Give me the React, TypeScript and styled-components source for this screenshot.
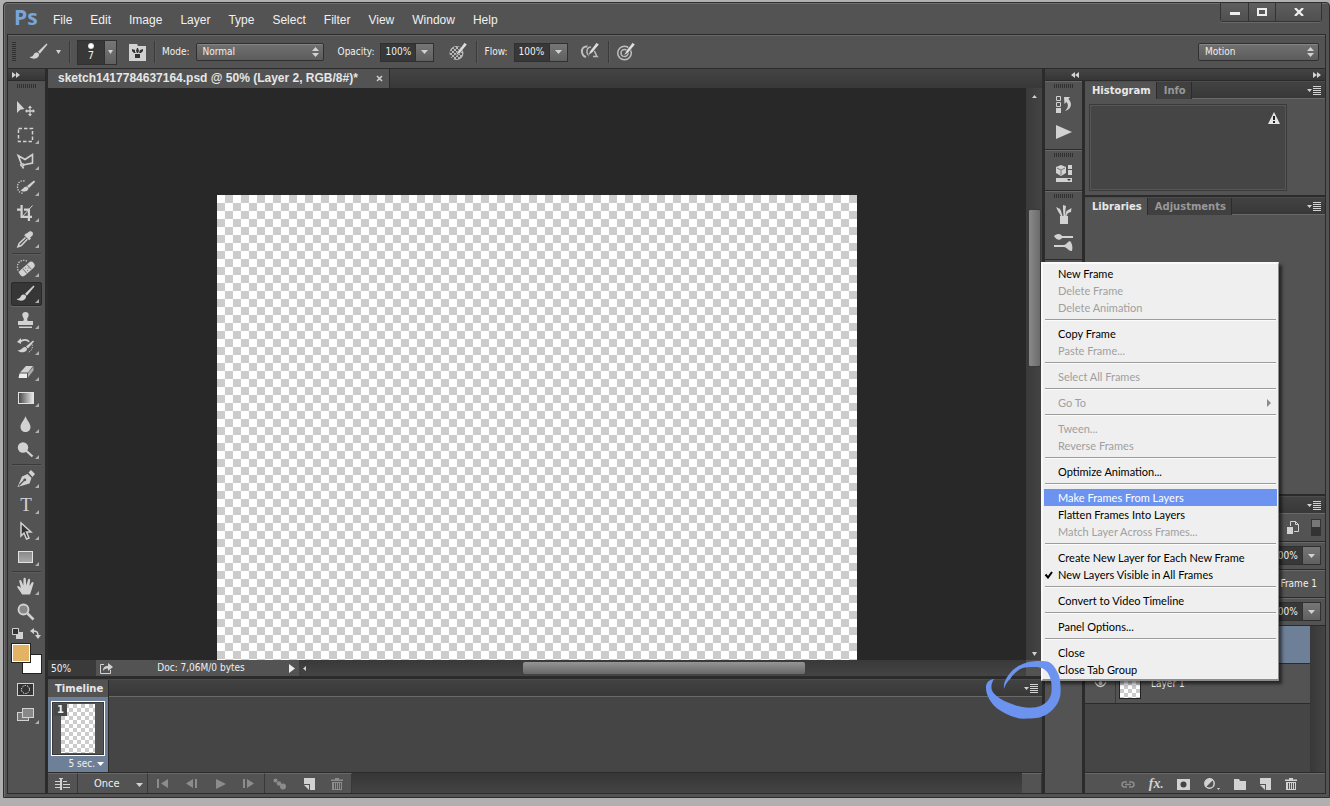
import React from "react";
import styled, { createGlobalStyle, css } from "styled-components";

const ui = `"DejaVu Sans Condensed", "DejaVu Sans", sans-serif`;
const title = `"DejaVu Sans", sans-serif`;
const edge = "#2b2b2b";
const shine = "#696969";
const base = "#535353";
const well = "#454545";
const ink = "#f0f0f0";
const icon = "#d2d2d2";
const checker = (a: number) =>
  `repeating-conic-gradient(#ccc 0 25%, #fff 0 50%) 0 0 / ${a * 2}px ${a * 2}px`;

const GlobalStyle = createGlobalStyle`
  * { box-sizing: border-box; }
  body { margin: 0; background: #b0b0b0; font: 10px/12px ${ui}; color: ${ink}; overflow: hidden; }
  button, select, input { font: inherit; color: inherit; margin: 0; padding: 0; border: 0; border-radius: 0; background: none; }
  svg { display: block; flex: none; }
`;

const Page = styled.div`
  position: relative;
  height: 100vh;
  min-height: 780px;
  padding: 2px 0 8px 3px;
`;
const AppWindow = styled.div`
  display: flex;
  flex-direction: column;
  height: 100%;
  padding: 0 3px 3px;
  background: ${base};
  border: 1px solid #2e2e2e;
  border-radius: 4px 4px 0 0;
  box-shadow: inset 1px 1px 0 #6e6e6e;
`;
const TitleBar = styled.header`
  display: flex;
  align-items: center;
  flex: none;
  height: 31px;
  padding: 0 4px 0 7px;
`;
const Logo = styled.span`
  width: 39px;
  height: 31px;
  font: 700 21px/28px "Open Sans", sans-serif;
  color: #7aa5d8;
`;
const MenuBar = styled.nav`
  display: flex;
  gap: 18px;
  padding-top: 3px;
  font: 12px/16px "Liberation Sans", sans-serif;
`;
const WindowButtons = styled.div`
  display: flex;
  align-self: flex-start;
  margin-left: auto;
  border: 1px solid #333;
  border-top: 0;
  border-radius: 0 0 3px 3px;
  box-shadow: 0 1px 0 #6a6a6a;
`;
const WindowButton = styled.button<{ $wide?: boolean }>`
  display: grid;
  place-items: center;
  width: ${(p) => (p.$wide ? 46 : 27)}px;
  height: 18px;
  background: linear-gradient(#5e5e5e, #505050);
  & + & { border-left: 1px solid #333; }
`;
const Frame = styled.div`
  display: flex;
  flex-direction: column;
  flex: 1;
  min-height: 0;
  border: 1px solid ${edge};
`;
const OptionsBar = styled.div`
  display: flex;
  align-items: center;
  flex: none;
  height: 34px;
  padding: 1px 6px 0 4px;
  border-bottom: 1px solid ${edge};
  box-shadow: inset 0 1px 0 ${shine};
`;
const Group = styled.div<{ $gap?: number }>`
  display: flex;
  align-items: center;
  gap: ${(p) => p.$gap ?? 12}px;
  padding: 0 8px 0 6px;
`;
const BarRule = styled.i`
  width: 2px;
  height: 22px;
  border-left: 1px solid #3a3a3a;
  border-right: 1px solid #5c5c5c;
`;
const SideGrip = styled.i`
  width: 4px;
  height: 20px;
  margin-right: 7px;
  background: repeating-linear-gradient(#303030 0 1px, transparent 1px 2px);
`;
const Label = styled.label`
  display: flex;
  align-items: center;
  gap: 6px;
  white-space: nowrap;
`;
const SelectBox = styled.span<{ $w: number }>`
  position: relative;
  display: block;
  width: ${(p) => p.$w}px;
  height: 18px;
  border: 1px solid #303030;
  border-radius: 2px;
  background: linear-gradient(#717171, #5c5c5c);
  box-shadow: inset 0 1px 0 #858585;
  select { width: 100%; height: 16px; padding-left: 6px; appearance: none; outline: none; }
  svg { position: absolute; right: 4px; top: 3px; pointer-events: none; }
`;
const FieldBox = styled.span`
  display: flex;
  width: 54px;
  height: 19px;
  border: 1px solid #303030;
  background: #383838;
  input { width: 34px; padding-left: 4px; outline: none; }
`;
const DropButton = styled.button<{ $w?: number }>`
  display: grid;
  place-items: center;
  flex: none;
  width: ${(p) => p.$w ?? 18}px;
  height: 100%;
  border-left: 1px solid #303030;
  background: linear-gradient(#767676, #606060);
`;
const BrushSize = styled.div`
  display: flex;
  width: 40px;
  height: 25px;
  border: 1px solid #303030;
  background: #383838;
`;
const BrushDot = styled.div`
  flex: 1;
  text-align: center;
  font-size: 11px;
  line-height: 14px;
  &::before {
    content: "";
    display: block;
    width: 6px;
    height: 6px;
    margin: 2px auto 0;
    border-radius: 50%;
    background: radial-gradient(#fff 40%, #999);
  }
`;
const PlainButton = styled.button`
  display: grid;
  place-items: center;
  flex: none;
`;
const Push = styled.div`margin-left: auto;`;

const Body = styled.div`
  display: flex;
  gap: 3px;
  flex: 1;
  min-height: 0;
  background: ${edge};
`;
const HeaderStrip = styled.div`
  display: flex;
  align-items: center;
  flex: none;
  height: 12px;
  border-bottom: 1px solid ${edge};
  background: linear-gradient(#444, #363636);
`;
const ToolColumn = styled.aside`
  width: 37px;
  flex: none;
  display: flex;
  flex-direction: column;
  align-items: center;
  background: ${base};
  ${HeaderStrip} { width: 100%; padding-left: 4px; }
`;
const TopGrip = styled.i`
  display: block;
  width: 20px;
  height: 4px;
  margin: 3px auto 8px;
  background: repeating-linear-gradient(90deg, #303030 0 1px, transparent 1px 2px);
`;
const ToolButton = styled.button<{ $on?: boolean; $flyout?: boolean }>`
  position: relative;
  display: flex;
  align-items: center;
  flex: none;
  width: 31px;
  height: 24px;
  padding-left: 4px;
  margin: 1px 0;
  border: 1px solid transparent;
  border-radius: 2px;
  ${(p) => p.$on && css`background: #363636; border-color: #2a2a2a; box-shadow: 0 1px 0 #666;`}
  ${(p) =>
    p.$flyout &&
    css`&::after {
      content: "";
      position: absolute;
      right: 2px;
      bottom: 2px;
      border: 2px solid #b0b0b0;
      border-top-color: transparent;
      border-left-color: transparent;
    }`}
`;
const ToolRule = styled.i`
  width: 29px;
  height: 2px;
  flex: none;
  margin-top: 1px;
  background: #3a3a3a;
  border-bottom: 1px solid #5c5c5c;
`;
const MiniRow = styled.div`
  display: flex;
  align-items: center;
  gap: 7px;
  height: 16px;
`;
const Swatches = styled.div`
  position: relative;
  width: 31px;
  height: 31px;
  margin: 2px 0;
`;
const Swatch = styled.button<{ $color: string; $back?: boolean }>`
  position: absolute;
  ${(p) => (p.$back ? "right: 0; bottom: 0;" : "left: 0; top: 0;")}
  width: 20px;
  height: 20px;
  border: 1px solid #222;
  background: ${(p) => p.$color};
  box-shadow: inset 0 0 0 1px #fff;
`;

const Center = styled.main`
  display: flex;
  flex-direction: column;
  flex: 1;
  min-width: 0;
`;
const DocTabs = styled.div`
  flex: none;
  height: 19px;
  background: linear-gradient(#444, #383838);
`;
const DocTab = styled.div`
  display: inline-flex;
  align-items: center;
  gap: 18px;
  height: 19px;
  padding: 0 6px 0 10px;
  background: ${base};
  border-right: 1px solid ${edge};
  font: 700 12px/19px "Liberation Sans", sans-serif;
  color: #e6e6e6;
`;
const Viewport = styled.div`
  display: flex;
  flex: 1;
  min-height: 0;
`;
const Canvas = styled.div`
  display: flex;
  justify-content: center;
  flex: 1;
  min-width: 0;
  padding-top: 107px;
  background: #282828;
`;
const Artboard = styled.div`
  width: 640px;
  background: ${checker(8)};
`;
const VScroll = styled.div`
  display: flex;
  flex-direction: column;
  align-items: center;
  width: 16px;
  padding: 7px 0 4px;
  background: linear-gradient(90deg, #3a3a3a, #444);
`;
const VThumb = styled.div`
  width: 13px;
  height: 158px;
  margin: 111px 0 auto;
  border: 1px solid #3a3a3a;
  border-radius: 2px;
  background: linear-gradient(90deg, #8a8a8a, #6b6b6b);
`;
const StatusBar = styled.div`
  display: flex;
  align-items: center;
  flex: none;
  height: 16px;
  background: linear-gradient(#393939, #444);
`;
const Zoom = styled.input.attrs({ "aria-label": "Zoom" })`
  && { width: 48px; height: 16px; padding-left: 3px; background: #3a3a3a; }
`;
const DocInfo = styled.div`
  display: flex;
  align-items: center;
  width: 203px;
  height: 16px;
  padding: 0 4px;
  background: ${base};
  span { flex: 1; text-align: center; }
`;
const HTrack = styled.div`
  display: flex;
  flex: 1;
  align-items: center;
  padding-left: 4px;
`;
const HThumb = styled.div`
  width: 39%;
  height: 12px;
  margin: 0 auto 0 30%;
  border-radius: 2px;
  background: linear-gradient(#959595, #686868);
`;
const ScrollEnd = styled.div`
  width: 16px;
  height: 16px;
  background: ${base};
`;
const TabStrip = styled.div`
  display: flex;
  flex: none;
  height: 18px;
  background: linear-gradient(#424242, #383838);
  border-bottom: 1px solid ${shine};
  border-top: 1px solid #4c4c4c;
`;
const PanelTab = styled.button<{ $on?: boolean }>`
  height: 17px;
  padding: 0 5px 0 7px;
  border-right: 1px solid ${edge};
  font: 700 10px/16px ${title};
  color: ${(p) => (p.$on ? "#e8e8e8" : "#989898")};
  background: ${(p) => (p.$on ? base : "#404040")};
`;
const PanelMenuButton = styled(PlainButton)`
  margin-left: auto;
  padding-right: 4px;
`;
const Timeline = styled.section`
  display: flex;
  flex-direction: column;
  flex: none;
  height: 115px;
  margin-top: 2px;
  border-top: 1px solid ${edge};
`;
const FrameList = styled.div`
  flex: 1;
  min-height: 0;
  background: ${well};
`;
const FrameCell = styled.div`
  width: 61px;
  height: 100%;
  padding: 4px 3px 0;
  background: #6e8097;
  border-right: 1px solid ${edge};
`;
const FrameThumb = styled.div`
  display: flex;
  justify-content: center;
  width: 54px;
  height: 55px;
  padding: 2px 0;
  border: 1px solid #fff;
  box-shadow: inset 0 0 0 1px #3a3a3a;
  background: ${base};
  position: relative;
  i { width: 34px; background: ${checker(4)}; }
  b {
    position: absolute; left: 2px; top: 2px; width: 13px; height: 12px;
    background: #484848; text-align: center; font: 700 10px/12px ${title};
  }
`;
const Delay = styled.button`
  display: flex;
  align-items: center;
  gap: 2px;
  height: 16px;
  margin-left: auto;
  padding-right: 1px;
`;
const Footer = styled.div`
  display: flex;
  flex: none;
  height: 21px;
  border-top: 1px solid ${edge};
  background: linear-gradient(#363636, #444);
`;
const FootGroup = styled.div<{ $w: number }>`
  display: flex;
  align-items: center;
  justify-content: space-around;
  width: ${(p) => p.$w}px;
  height: 100%;
  border-right: 1px solid #383838;
  border-top: 1px solid ${shine};
  background: ${base};
`;
const LoopBox = styled.span`
  position: relative;
  width: 100%;
  select { width: 100%; padding-left: 16px; appearance: none; outline: none; font-size: 11px; }
  svg { position: absolute; right: 4px; top: 5px; pointer-events: none; }
`;

const Dock = styled.div`
  display: flex;
  flex-direction: column;
  width: 280px;
  flex: none;
`;
const DockHeader = styled(HeaderStrip)`
  justify-content: space-between;
  padding: 0 4px 0 26px;
`;
const DockBody = styled.div`
  display: flex;
  gap: 3px;
  flex: 1;
  min-height: 0;
`;
const IconColumn = styled.div`
  width: 37px;
  background: ${base};
`;
const IconGroup = styled.div`
  padding-bottom: 3px;
  border-bottom: 1px solid ${edge};
  box-shadow: inset 0 1px 0 ${shine};
  overflow: hidden;
  ${TopGrip} { margin: 3px auto 2px; }
  button { width: 37px; height: 28px; }
`;
const Panels = styled.div`
  display: flex;
  flex-direction: column;
  flex: 1;
`;
const Panel = styled.section<{ $h?: number }>`
  display: flex;
  flex-direction: column;
  ${(p) => (p.$h ? `flex: none; height: ${p.$h}px; margin-bottom: 2px;` : "flex: 1;")}
  background: ${base};
`;
const Histogram = styled.div`
  width: 198px;
  height: 87px;
  margin: 5px 0 0 4px;
  padding: 7px 6px;
  display: flex;
  justify-content: flex-end;
  border: 1px solid #3a3a3a;
  box-shadow: inset 0 0 0 1px #565656;
  background: ${well};
`;
const Corner = styled.i`
  width: 9px;
  height: 9px;
  margin: auto 1px 1px auto;
  background: radial-gradient(#282828 40%, transparent 50%) 0 0 / 2px 2px;
  clip-path: polygon(100% 0, 100% 100%, 0 100%);
`;
const LayerControls = styled.div`
  display: flex;
  align-items: center;
  justify-content: flex-end;
  gap: 12px;
  height: 28px;
  flex: none;
  padding-right: 4px;
  border-bottom: 1px solid ${edge};
  box-shadow: 0 1px 0 ${shine};
`;
const FrameName = styled.span`
  padding-right: 4px;
`;
const LayerArea = styled.div`
  display: flex;
  flex: 1;
  background: ${well};
`;
const LayerList = styled.div`flex: 1;`;
const LayerScroll = styled.div`
  width: 15px;
  background: linear-gradient(90deg, #383838, #444);
`;
const LayerRow = styled.div<{ $on?: boolean }>`
  display: flex;
  align-items: center;
  height: ${(p) => (p.$on ? 38 : 40)}px;
  background: ${(p) => (p.$on ? "#6e8097" : base)};
  border-bottom: 1px solid ${edge};
`;
const EyeCell = styled.button`
  display: grid;
  place-items: center;
  width: 31px;
  height: 100%;
  border-right: 1px solid #3a3a3a;
`;
const LayerThumb = styled.i`
  width: 22px;
  height: 31px;
  margin: 0 10px 0 3px;
  border: 1px solid #222;
  background: ${checker(4)};
`;
const LayerFooter = styled(Footer)`
  align-items: center;
  justify-content: space-between;
  padding: 2px 28px 0 36px;
  background: ${base};
  box-shadow: inset 0 1px 0 ${shine};
`;
const FxMark = styled.span`
  font: italic 700 14px/14px "Liberation Serif", serif;
  color: ${icon};
`;

const Popup = styled.div`
  position: absolute;
  right: 51px;
  bottom: 125px;
  width: 238px;
  padding: 1px;
  border: 2px solid #fafafa;
  border-right: 1px solid #8c8c8c;
  border-bottom: 2px solid #8c8c8c;
  background: #efefef;
  box-shadow: 3px 3px 3px rgba(0, 0, 0, 0.55);
`;
const MenuItem = styled.button<{ $hot?: boolean }>`
  display: flex;
  align-items: center;
  width: 233px;
  height: 17px;
  padding-right: 6px;
  font: 11px/17px Lato, sans-serif;
  color: #000;
  &:disabled { color: #9f9f9f; }
  ${(p) => p.$hot && css`background: #6b93ef; color: #fff;`}
  svg:last-child:not(:first-child) { margin-left: auto; }
`;
const Check = styled.span`
  width: 14px;
  flex: none;
`;
const MenuRule = styled.hr`
  height: 2px;
  margin: 3px 1px 4px;
  border: 0;
  border-top: 1px solid #9c9c9c;
  border-bottom: 1px solid #fbfbfb;
`;
const Scribble = styled.svg`
  position: absolute;
  right: 269px;
  bottom: 86px;
  pointer-events: none;
`;

const Svg = ({ w = 20, h = 20, children }: { w?: number; h?: number; children: React.ReactNode }) => (
  <svg width={w} height={h} viewBox={`0 0 ${w} ${h}`} fill={icon} stroke="none" aria-hidden="true">
    {children}
  </svg>
);
const Caret = ({ w = 7, color = icon }: { w?: number; color?: string }) => (
  <Svg w={w} h={4}><path fill={color} d={`M0 0h${w}L${w / 2} 4z`} /></Svg>
);
const UpDown = () => (
  <Svg w={7} h={10}><path d="M0 4L3.500 0 7 4zM0 6h7L3.500 10z" /></Svg>
);
const Chevrons = ({ left }: { left?: boolean }) => (
  <Svg w={8} h={6}><path d={left ? "M4 0v6L0 3zM8 0v6L4 3z" : "M0 0l4 3-4 3zM4 0l4 3-4 3z"} /></Svg>
);
const PanelMenuIcon = () => (
  <Svg w={14} h={9}><path d="M0 3h5L2.500 6zM6 0h8v1H6zM6 2h8v1H6zM6 4h8v1H6zM6 6h8v1H6zM6 8h8v1H6z" /></Svg>
);
const brush = (
  <>
    <path d="M17.500 1.500L9 9.700l1.800 2L18.500 2.500z" />
    <path d="M8.200 10.500c-2.200-.4-3.200 1-3.800 2.600-.6 1.300-1.800 1.900-3.900 2 2.500 2 7 2.200 8.800-.3.800-1.200 1-2.200.7-3z" />
  </>
);
const BrushIcon = () => <Svg>{brush}</Svg>;
const TargetPen = ({ kind }: { kind: "opacity" | "size" | "air" }) => (
  <Svg>
    {kind === "opacity" && (
      <>
        <circle cx="8.500" cy="11" r="7" fill="#b8b8b8" />
        <path fill="#555" d="M6 5h2v2H6zM10 5h2v2h-2zM4 7h2v2H4zM8 7h2v2H8zM2 9h2v2H2zM6 9h2v2H6zM10 9h2v2h-2zM4 11h2v2H4zM8 11h2v2H8zM12 11h2v2h-2zM2 13h2v2H2zM6 13h2v2H6zM10 13h2v2h-2zM4 15h2v2H4zM8 15h2v2H8z" />
      </>
    )}
    {kind === "size" && (
      <g fill="none" stroke="#bdbdbd" strokeWidth="1.500">
        <circle cx="8.500" cy="11" r="6.800" />
        <circle cx="8.500" cy="11" r="3.500" />
      </g>
    )}
    {kind === "air" && (
      <g fill="none" stroke="#bdbdbd" strokeWidth="2">
        <path d="M7.500 4.500C3.500 4 1.500 7 2 10.200c.3 2.700 2 4.300 4 4.800" />
        <path strokeWidth="1.500" d="M11 5C8 5 6.500 7.500 7 10.500c.2 1.600 1 2.800 2 3.500M14 9c2 1.500 1.500 4 3 5.500h-4" />
      </g>
    )}
    <path fill="#dedede" stroke="#444" strokeWidth=".6" d="M16.500.5l2.700 2-6.700 8L7.500 14l2.500-5z" />
  </Svg>
);

const toolIcons: Record<string, React.ReactNode> = {
  Move: <><path d="M1 2v12l3.200-3.200L8.500 10z" /><path d="M14 6.500l2 2.500h-1.400v2.300h2.200V9.900L19 12l-2.200 2.100v-1.400h-2.200V15H16l-2 2.500-2-2.500h1.400v-2.300h-2.200v1.400L9 12l2.200-2.100v1.400h2.200V9H12z" /></>,
  Marquee: <rect x="2.500" y="3.500" width="14" height="13" fill="none" stroke={icon} strokeWidth="1.500" strokeDasharray="3.500 2" />,
  Lasso: <path fill="none" stroke={icon} strokeWidth="1.600" d="M5.500 13L2.200 4.500 9 8.500l7.500-5V12L8 13.800M5.500 13c-1.500 1-.5 2.200 1 2 1.800-.2 2-1.700.5-2zM6 15l1.500 2.500" />,
  "Quick Selection": <><path fill="none" stroke={icon} strokeWidth="1.300" strokeDasharray="1.300 1.300" d="M8.500 4C4 3 1.500 6 1.500 10c0 4 3 6.500 6 6" /><path d="M18 3.500l1.200 1.200L13 11l-2-2z" /><path d="M10.500 9.500c-3 0-3 3-6 3.500 2 2.500 8 2 8-2z" /></>,
  Crop: <><path d="M4.500 2h2.200v10.800H16V15H4.500zM1 5.500h3.500v2.200H1zM8 5.500h6V18h-2.200V7.700H8z" /><path stroke={icon} strokeWidth="1" d="M6 14L16.500 2.500" /></>,
  Eyedropper: <><path d="M11.500 4c2-3 5.500-2 5.500.5s-1.500 3-3 4l1 1-1.800 1.800-5-5L10 4.500z" /><path fill="none" stroke={icon} strokeWidth="1.500" d="M9.500 8.500l-6.300 6-1.200 3.300L5.300 16.500l6-6.200" /></>,
  Healing: <><path fill="none" stroke={icon} strokeWidth="1.300" strokeDasharray="1.300 1.300" d="M11 3C5 1 1 4.500 1.500 9.500c0 2 .8 4 2.500 5" /><g transform="rotate(-42 11 11)"><rect x="2" y="7.500" width="18" height="7" rx="3.500" /><path fill="#777" d="M7.500 8h1v6h-1zM13.500 8h1v6h-1zM10 9h1v1h-1zM12 10.500h1v1h-1zM10 12h1v1h-1z" /></g></>,
  Brush: brush,
  Stamp: <path d="M9.500 2c2 0 3.200 1.300 3.200 3 0 2-1.500 2.500-1.500 4.500 0 1 .5 1.500 2 1.500H17v4H2v-4h3.800c1.500 0 2-.5 2-1.500C7.800 7.500 6.300 7 6.300 5c0-1.700 1.200-3 3.200-3zM3 16.500h13V18H3z" />,
  "History Brush": <><path d="M17 4.500l1 1-6 7-2-2z" /><path d="M9.500 11c-3-.5-3 3-8 3.500 3 3 10 2 9.500-2z" /><path fill="none" stroke={icon} strokeWidth="1.700" d="M4 6c3-3 8-2.500 9 0" /><path d="M1 6l4-4v6z" /><path fill="none" stroke={icon} strokeDasharray="1.300 1.300" d="M16 8.500c1 3 0 6-4 8" /></>,
  Eraser: <><path d="M10 4h7l-5 6.500H4z" /><path fill="#eee" d="M3.500 11.500H11V16H2.500z" /><path fill="#aaa" d="M12 11l5.500-6.500v4L12 15.500z" /></>,
  Gradient: <><defs><linearGradient id="fade"><stop stopColor="#444" /><stop offset="1" stopColor="#eee" /></linearGradient></defs><rect x="2.500" y="4.500" width="15" height="11" fill="url(#fade)" stroke="#e2e2e2" /></>,
  Blur: <path d="M9.500 2c1 4 5 7 5 11 0 3-2.200 5-5 5s-5-2-5-5c0-4 4-7 5-11z" />,
  Dodge: <><circle cx="7" cy="7.500" r="5.200" /><path stroke={icon} strokeWidth="2.200" d="M10 10.500l6.500 6" /></>,
  Pen: <><path d="M11.500 5l4 4-2 5.500L1.500 18 6 7.500zM12.500 3.500L15 1l4 4-2.500 3z" /><path stroke={base} strokeWidth="1.200" d="M3 16.500l5.500-5.500" /><circle cx="8.800" cy="10.800" r="1.400" fill={base} /></>,
  Path: <path fill="#333" stroke={icon} strokeWidth="1.500" d="M5 2v13l3-3 2.500 6 2.500-1-2.500-6h4.500z" />,
  Shape: <><defs><linearGradient id="plate" x2="0" y2="1"><stop stopColor="#888" /><stop offset="1" stopColor="#aaa" /></linearGradient></defs><rect x="2.500" y="4.500" width="14" height="11" fill="url(#plate)" stroke="#e2e2e2" /></>,
  Hand: <path d="M6 18.500c-1-3-4-5-5-8 1-1.200 2.200-.5 4 1.500L3.300 5.500c-.2-1.700 1.700-1.900 2.200-.4L7.300 9.500 7.500 3c0-1.700 2.200-1.700 2.300 0l.5 6.500L12 3.800c.4-1.500 2.300-1.100 2.100.5L13.500 10l2-3.300c.9-1.300 2.500-.5 2 .9L15.500 14l-1.500 4.500z" />,
  Zoom: <><circle cx="7.500" cy="7.500" r="5" fill="#888" stroke={icon} strokeWidth="1.800" /><path stroke={icon} strokeWidth="2.500" d="M11.500 11.500l6 6" /></>,
};
const TypeGlyph = styled.span`
  width: 20px;
  text-align: center;
  font: 19px/20px "Liberation Serif", serif;
  color: ${icon};
`;
const toolGroups = [
  ["Move", "Marquee", "Lasso", "Quick Selection", "Crop", "Eyedropper"],
  ["Healing", "Brush", "Stamp", "History Brush", "Eraser", "Gradient", "Blur", "Dodge"],
  ["Pen", "Type", "Path", "Shape"],
  ["Hand", "Zoom"],
];

const menuGroups: { text: string; off?: boolean; hot?: boolean; check?: boolean; sub?: boolean }[][] = [
  [{ text: "New Frame" }, { text: "Delete Frame", off: true }, { text: "Delete Animation", off: true }],
  [{ text: "Copy Frame" }, { text: "Paste Frame...", off: true }],
  [{ text: "Select All Frames", off: true }],
  [{ text: "Go To", off: true, sub: true }],
  [{ text: "Tween...", off: true }, { text: "Reverse Frames", off: true }],
  [{ text: "Optimize Animation..." }],
  [{ text: "Make Frames From Layers", hot: true }, { text: "Flatten Frames Into Layers" }, { text: "Match Layer Across Frames...", off: true }],
  [{ text: "Create New Layer for Each New Frame" }, { text: "New Layers Visible in All Frames", check: true }],
  [{ text: "Convert to Video Timeline" }],
  [{ text: "Panel Options..." }],
  [{ text: "Close" }, { text: "Close Tab Group" }],
];

const Percent = ({ label }: { label: string }) => (
  <FieldBox>
    <input aria-label={label} defaultValue="100%" />
    <DropButton aria-label={`${label} slider`}><Caret /></DropButton>
  </FieldBox>
);
const NewIcon = () => <Svg w={12} h={12}><path d="M1 0h11v12H7V6H1z" /><path d="M1 7h5v5z" /></Svg>;
const TrashIcon = ({ color = icon }: { color?: string }) => (
  <Svg w={12} h={12}><path fill={color} d="M4 0h4v1.500h4V3H0V1.500h4zM1 4h10v8H1z" /><path stroke={base} d="M3.500 5v6M5.500 5v6M7.500 5v6M9.500 5v6" /></Svg>
);

const Tools = () => (
  <ToolColumn>
    <HeaderStrip><Chevrons /></HeaderStrip>
    <TopGrip />
    {toolGroups.map((group, i) => (
      <React.Fragment key={i}>
        {i > 0 && <ToolRule />}
        {group.map((name) => (
          <ToolButton key={name} aria-label={name} $on={name === "Brush"} $flyout={name !== "Move" && name !== "Zoom"}>
            {name === "Type" ? <TypeGlyph>T</TypeGlyph> : <Svg>{toolIcons[name]}</Svg>}
          </ToolButton>
        ))}
      </React.Fragment>
    ))}
    <MiniRow>
      <PlainButton aria-label="Default colors">
        <Svg w={11} h={11}><path d="M4 4h7v7H4z" /><path fill="#333" stroke={icon} d="M.5.500h6v6h-6z" /></Svg>
      </PlainButton>
      <PlainButton aria-label="Swap colors">
        <Svg w={11} h={11}><path fill="none" stroke={icon} strokeWidth="1.500" d="M3 3c4 0 5 1 5 5" /><path d="M0 3l4-3v6zM5 7h6l-3 4z" /></Svg>
      </PlainButton>
    </MiniRow>
    <Swatches>
      <Swatch $color="#fff" $back aria-label="Background color" />
      <Swatch $color="#e3b363" aria-label="Foreground color" />
    </Swatches>
    <ToolButton aria-label="Quick mask">
      <Svg w={19} h={13}><rect x="1.500" y=".5" width="16" height="12" fill="#333" stroke={icon} /><circle cx="9.500" cy="6.500" r="4" fill="none" stroke="#fff" strokeDasharray="1.300 1.200" /></Svg>
    </ToolButton>
    <ToolButton aria-label="Screen mode" $flyout>
      <Svg w={19} h={14}><rect x="1.500" y="4.500" width="11" height="8" fill="#777" stroke={icon} /><rect x="6.500" y=".5" width="11" height="9" fill="#888" stroke={icon} /></Svg>
    </ToolButton>
  </ToolColumn>
);

const App = () => (
  <Page>
    <GlobalStyle />
    <AppWindow>
      <TitleBar>
        <Logo>Ps</Logo>
        <MenuBar>
          {["File", "Edit", "Image", "Layer", "Type", "Select", "Filter", "View", "Window", "Help"].map((m) => (
            <button key={m}>{m}</button>
          ))}
        </MenuBar>
        <WindowButtons>
          <WindowButton aria-label="Minimize"><Svg w={10} h={8}><path fill="#eee" d="M0 4h10v3H0z" /></Svg></WindowButton>
          <WindowButton aria-label="Maximize"><Svg w={10} h={8}><path fill="none" stroke="#eee" strokeWidth="2" d="M1 1h8v6H1z" /></Svg></WindowButton>
          <WindowButton aria-label="Close" $wide><Svg w={10} h={8}><path stroke="#eee" strokeWidth="2.300" d="M1 0l8 8M9 0L1 8" /></Svg></WindowButton>
        </WindowButtons>
      </TitleBar>
      <Frame>
        <OptionsBar>
          <SideGrip />
          <Group $gap={7}>
            <PlainButton aria-label="Brush tool"><BrushIcon /></PlainButton>
            <PlainButton aria-label="Tool presets"><Caret w={5} /></PlainButton>
          </Group>
          <BarRule />
          <Group>
            <BrushSize>
              <BrushDot>7</BrushDot>
              <DropButton $w={12} aria-label="Brush picker"><Caret w={5} /></DropButton>
            </BrushSize>
            <PlainButton aria-label="Brush panel">
              <Svg w={17} h={17}><path d="M0 0h8l1 2h8v15H0z" /><path fill="#333" d="M6 10h5v4H6zM3 5l3 1v2l1 1H5L3 7zM8 4h1l1 3-1 2H8L7 7zM11 6l3-1v2l-2 2h-2z" /></Svg>
            </PlainButton>
          </Group>
          <BarRule />
          <Group $gap={14}>
            <Label>Mode:
              <SelectBox $w={128}><select><option>Normal</option></select><UpDown /></SelectBox>
            </Label>
            <Label>Opacity:<Percent label="Opacity" /></Label>
            <PlainButton aria-label="Pressure opacity"><TargetPen kind="opacity" /></PlainButton>
          </Group>
          <BarRule />
          <Group>
            <Label>Flow:<Percent label="Flow" /></Label>
            <PlainButton aria-label="Airbrush"><TargetPen kind="air" /></PlainButton>
          </Group>
          <BarRule />
          <Group><PlainButton aria-label="Pressure size"><TargetPen kind="size" /></PlainButton></Group>
          <Push>
            <SelectBox $w={121}><select aria-label="Workspace"><option>Motion</option></select><UpDown /></SelectBox>
          </Push>
        </OptionsBar>
        <Body>
          <Tools />
          <Center>
            <DocTabs>
              <DocTab>
                sketch1417784637164.psd @ 50% (Layer 2, RGB/8#)*
                <PlainButton aria-label="Close document"><Svg w={7} h={7}><path stroke={icon} strokeWidth="1.500" d="M1 1l5 5M6 1L1 6" /></Svg></PlainButton>
              </DocTab>
            </DocTabs>
            <Viewport>
              <Canvas><Artboard /></Canvas>
              <VScroll>
                <Svg w={5} h={3}><path d="M0 3h5L2.500 0z" /></Svg>
                <VThumb />
                <Caret w={5} />
              </VScroll>
            </Viewport>
            <StatusBar>
              <Zoom defaultValue="50%" />
              <DocInfo>
                <Svg w={13} h={11}><path fill="none" stroke={icon} d="M4 1.500H.5v9h10V7" /><path d="M3 8c0-4 2-5 5-5V0l5 4-5 4V5.500C6 5.500 4 6 3 8z" /></Svg>
                <span>Doc: 7,06M/0 bytes</span>
                <Svg w={6} h={9}><path fill="#eee" d="M0 0l6 4.500L0 9z" /></Svg>
              </DocInfo>
              <HTrack>
                <Svg w={3} h={5}><path d="M3 0v5L0 2.500z" /></Svg>
                <HThumb />
              </HTrack>
              <ScrollEnd />
            </StatusBar>
            <Timeline>
              <TabStrip>
                <PanelTab $on>Timeline</PanelTab>
                <PanelMenuButton aria-label="Timeline menu"><PanelMenuIcon /></PanelMenuButton>
              </TabStrip>
              <FrameList>
                <FrameCell>
                  <FrameThumb><i /><b>1</b></FrameThumb>
                  <Delay>5 sec.<Caret color="#fff" /></Delay>
                </FrameCell>
              </FrameList>
              <Footer>
                <FootGroup $w={30}>
                  <PlainButton aria-label="Convert timeline"><Svg w={15} h={12}><path d="M0 3h5v1H0zM0 6h5v1H0zM0 9h5v1H0zM4 0h4v1H7v11H5V1H4zM8 3h4v1H8zM8 6h7v1H8zM8 9h7v1H8z" /></Svg></PlainButton>
                </FootGroup>
                <FootGroup $w={70}>
                  <LoopBox><select aria-label="Looping"><option>Once</option></select><Caret /></LoopBox>
                </FootGroup>
                <FootGroup $w={117}>
                  <PlainButton aria-label="First frame"><Svg w={12} h={9}><path fill="#8c8c8c" d="M0 0h2v9H0zM11 0v9L4 4.500z" /></Svg></PlainButton>
                  <PlainButton aria-label="Previous frame"><Svg w={12} h={9}><path fill="#8c8c8c" d="M7 0v9L0 4.500zM9 0h2v9H9z" /></Svg></PlainButton>
                  <PlainButton aria-label="Play"><Svg w={10} h={10}><path fill="#8c8c8c" d="M0 0l10 5-10 5z" /></Svg></PlainButton>
                  <PlainButton aria-label="Next frame"><Svg w={12} h={9}><path fill="#8c8c8c" d="M0 0h2v9H0zM4 0l7 4.500L4 9z" /></Svg></PlainButton>
                </FootGroup>
                <FootGroup $w={87}>
                  <PlainButton aria-label="Tween"><Svg w={14} h={12}><g fill="#8c8c8c"><circle cx="2.500" cy="2.500" r="2" /><circle cx="6" cy="5.500" r="2.300" /><circle cx="10" cy="8.500" r="3" /></g></Svg></PlainButton>
                  <PlainButton aria-label="New frame"><NewIcon /></PlainButton>
                  <PlainButton aria-label="Delete frame"><TrashIcon color="#8c8c8c" /></PlainButton>
                </FootGroup>
                <Push><FootGroup $w={20} /></Push>
              </Footer>
            </Timeline>
          </Center>
          <Dock>
            <DockHeader><Chevrons left /><Chevrons /></DockHeader>
            <DockBody>
              <IconColumn>
                <IconGroup>
                  <TopGrip />
                  <PlainButton aria-label="History"><Svg w={16} h={18}><path fill="none" stroke={icon} d="M.5 1.500h4v4h-4zM.5 7.500h4v4h-4z" /><path d="M0 13h5v5H0z" /><path d="M8 2h6l-1.500 2C17 9 15 14 9 16c3-3 4-6 1.500-9L8.500 9z" /></Svg></PlainButton>
                  <PlainButton aria-label="Actions"><Svg w={16} h={14}><path d="M0 0l16 7-16 7z" /></Svg></PlainButton>
                </IconGroup>
                <IconGroup>
                  <TopGrip />
                  <PlainButton aria-label="Properties"><Svg w={16} h={17}><path d="M5 0l5 2v6l-5 3-5-3V2zM12 0h4v4h-4zM12 5h4v5h-4zM0 13h16v4H0z" /><path stroke="#777" fill="none" d="M1 3l4 2 4-2M5 5v5" /><path fill="#333" d="M11 14h4l-2 2z" /></Svg></PlainButton>
                </IconGroup>
                <IconGroup>
                  <TopGrip />
                  <PlainButton aria-label="Brush presets"><Svg w={16} h={20}><path d="M4 12h8v8H4zM7 1l3 1-.5 3L9 12H7.500L7 5zM0 3l4 2 1 2 1.500 5H5L2.500 8zM15.500 4L15 8l-3 1-1.500 3H9l1.500-5z" /></Svg></PlainButton>
                  <PlainButton aria-label="Brushes"><Svg w={19} h={17}><path d="M0 2c4-3 7-2 8 0h11v2H8C6 7 2 6 0 2zM0 11h10c2 0 3-3 6-4 2 2 3 6 2 10-4 0-5-4-8-4H0z" /></Svg></PlainButton>
                </IconGroup>
              </IconColumn>
              <Panels>
                <Panel $h={114}>
                  <TabStrip>
                    <PanelTab $on>Histogram</PanelTab>
                    <PanelTab>Info</PanelTab>
                    <PanelMenuButton aria-label="Histogram menu"><PanelMenuIcon /></PanelMenuButton>
                  </TabStrip>
                  <Histogram>
                    <Svg w={12} h={12}><path fill="#e4e4e4" d="M6 0l6 12H0z" /><path fill="#222" d="M5 4h2v4H5zM5 9h2v2H5z" /></Svg>
                  </Histogram>
                </Panel>
                <Panel $h={297}>
                  <TabStrip>
                    <PanelTab $on>Libraries</PanelTab>
                    <PanelTab>Adjustments</PanelTab>
                    <PanelMenuButton aria-label="Libraries menu"><PanelMenuIcon /></PanelMenuButton>
                  </TabStrip>
                  <Corner />
                </Panel>
                <Panel>
                  <TabStrip>
                    <PanelMenuButton aria-label="Layers menu"><PanelMenuIcon /></PanelMenuButton>
                  </TabStrip>
                  <LayerControls>
                    <PlainButton aria-label="Filter smart objects"><Svg w={12} h={13}><path fill="none" stroke={icon} d="M3.500 5V.5h5l3 3v7H7M8.500.500v3h3" /><path d="M0 6h6v7H0z" /></Svg></PlainButton>
                    <PlainButton aria-label="Toggle filter"><Svg w={10} h={17}><path fill="#333" d="M0 0h10v17H0z" /><path fill="#777" d="M1 1h8v7H1z" /></Svg></PlainButton>
                  </LayerControls>
                  <LayerControls><Percent label="Layer opacity" /></LayerControls>
                  <LayerControls><FrameName>Frame 1</FrameName></LayerControls>
                  <LayerControls><Percent label="Fill" /></LayerControls>
                  <LayerArea>
                    <LayerList>
                      <LayerRow $on />
                      <LayerRow>
                        <EyeCell aria-label="Layer visibility"><Svg w={13} h={8}><path fill="none" stroke={icon} strokeWidth="1.500" d="M1 2c3 6 8 6 11 0" /><circle cx="6.500" cy="3" r="2" /></Svg></EyeCell>
                        <LayerThumb />
                        Layer 1
                      </LayerRow>
                    </LayerList>
                    <LayerScroll />
                  </LayerArea>
                  <LayerFooter>
                    <PlainButton aria-label="Link layers"><Svg w={14} h={7}><path fill="none" stroke="#8c8c8c" strokeWidth="1.500" d="M6 1H3.500a2.500 2.500 0 000 5H6M8 1h2.500a2.500 2.500 0 010 5H8M4 3.500h6" /></Svg></PlainButton>
                    <PlainButton aria-label="Layer style"><FxMark>fx<small>.</small></FxMark></PlainButton>
                    <PlainButton aria-label="Add mask"><Svg w={13} h={11}><path d="M0 0h13v11H0z" /><circle cx="6.500" cy="5.500" r="3" fill="#444" /></Svg></PlainButton>
                    <PlainButton aria-label="Adjustment layer"><Svg w={16} h={12}><circle cx="5.500" cy="5.500" r="4.700" fill="none" stroke={icon} strokeWidth="1.500" /><path d="M9 2L2 9C0 6 1 2 4 1s5 0 5 1zM13 10h3l-1.500 2z" /></Svg></PlainButton>
                    <PlainButton aria-label="New group"><Svg w={12} h={11}><path d="M0 0h5l1 2h6v9H0z" /></Svg></PlainButton>
                    <PlainButton aria-label="New layer"><NewIcon /></PlainButton>
                    <PlainButton aria-label="Delete layer"><TrashIcon /></PlainButton>
                  </LayerFooter>
                </Panel>
              </Panels>
            </DockBody>
          </Dock>
        </Body>
      </Frame>
    </AppWindow>
    <Popup role="menu">
      {menuGroups.map((group, i) => (
        <React.Fragment key={i}>
          {i > 0 && <MenuRule />}
          {group.map((m) => (
            <MenuItem key={m.text} role="menuitem" disabled={m.off} $hot={m.hot}>
              <Check>{m.check && <Svg w={9} h={8}><path fill="none" stroke="#000" strokeWidth="2" d="M1.500 3.500L4 6.500 8 1" /></Svg>}</Check>
              {m.text}
              {m.sub && <Svg w={4} h={8}><path fill="#8c8c8c" d="M0 0l4 4-4 4z" /></Svg>}
            </MenuItem>
          ))}
        </React.Fragment>
      ))}
    </Popup>
    <Scribble width="76" height="60" viewBox="0 0 228 180" aria-hidden="true">
      <path
        fill="#6b93ef"
        d="M25 57C10 60 3 70 3 82c0 12 2 20 7 30 10 20 22 32 38 41 24 14 46 23 68 23 28 0 52-1 70-13 26-18 41-42 41-69 0-25-2-44-10-58C206 12 194 3 172 3c-22 0-40 1-57 8-22 9-34 20-45 35-10 14-15 26-13 40 5-14 10-22 19-30 8-12 18-22 30-29 13-6 28-6 44-6 18 0 32 6 40 20 8 14 10 28 10 45 0 18-6 33-20 44-14 11-28 13-45 13-24 0-42-5-60-13-22-9-38-18-50-32-8-10-8-26 2-41z"
      />
    </Scribble>
  </Page>
);

export default App;
